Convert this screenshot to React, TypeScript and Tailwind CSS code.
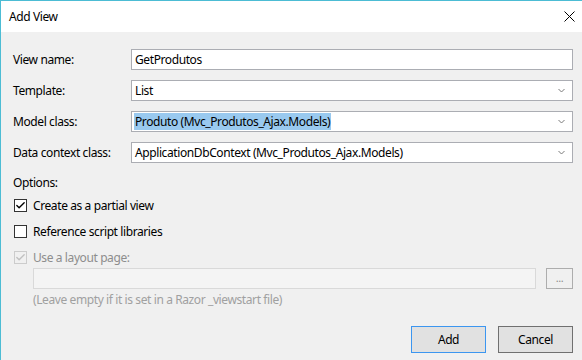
import { Check } from 'lucide-react'

const font = { fontFamily: '"Noto Sans", "Open Sans", sans-serif', letterSpacing: '-0.4px' }

function Chevron() {
  return (
    <svg width="7" height="5" viewBox="0 0 7 5" className="shrink-0">
      <path d="M0.5 1 L3.5 4 L6.5 1" fill="none" stroke="#7a7a7a" strokeWidth="1" />
    </svg>
  )
}

function Field({ label, children }: { label: string; children: React.ReactNode }) {
  return (
    <div className="flex items-center h-[21px]">
      <span className="w-[118px] text-[12px] text-black leading-none">{label}</span>
      {children}
    </div>
  )
}

function Combo({ value, selected = false }: { value: string; selected?: boolean }) {
  return (
    <div className="flex items-center justify-between w-[442px] h-[21px] bg-white border border-[#abadb3] pl-[2px] pr-[7px]">
      <span
        className={`text-[12px] leading-[17px] h-[17px] px-[1px] ${
          selected ? 'bg-[#99c9ef] text-black' : 'text-black'
        }`}
      >
        {value}
      </span>
      <Chevron />
    </div>
  )
}

function CheckBox({ checked, disabled = false }: { checked: boolean; disabled?: boolean }) {
  return (
    <div
      className={`w-[13px] h-[13px] flex items-center justify-center border ${
        disabled ? 'border-[#cccccc] bg-[#f0f0f0]' : 'border-[#333333] bg-white'
      }`}
    >
      {checked && (
        <Check size={11} strokeWidth={3} color={disabled ? '#c0c0c0' : '#000000'} />
      )}
    </div>
  )
}

export default function App() {
  return (
    <div className="w-[582px] h-[360px] bg-[#f0f0f0] border-l border-[#4cbcd4] flex flex-col overflow-hidden" style={font}>
      {/* Title bar */}
      <div className="h-[32px] bg-white border-t border-[#4cbcd4] flex items-center justify-between pl-[8px] pr-[6px] shrink-0">
        <span className="text-[12px] text-black">Add View</span>
        <svg width="11" height="11" viewBox="0 0 11 11" className="mt-[-1px] mr-[1px]">
          <path d="M0.5 0.5 L10.5 10.5 M10.5 0.5 L0.5 10.5" stroke="#000" strokeWidth="1" />
        </svg>
      </div>

      <div className="flex flex-col pl-[12px] pt-[17px]">
        <div className="flex flex-col gap-[10px]">
          <Field label="View name:">
            <div className="w-[442px] h-[21px] bg-white border border-[#abadb3] px-[3px] flex items-center text-[12px] text-black">
              GetProdutos
            </div>
          </Field>
          <Field label="Template:">
            <Combo value="List" />
          </Field>
          <Field label="Model class:">
            <Combo value="Produto (Mvc_Produtos_Ajax.Models)" selected />
          </Field>
          <Field label="Data context class:">
            <Combo value="ApplicationDbContext (Mvc_Produtos_Ajax.Models)" />
          </Field>
        </div>

        <div className="mt-[12px] text-[12px] text-black h-[16px] leading-[16px]">Options:</div>

        <div className="flex flex-col pl-[1px] mt-[8px] gap-[13px]">
          <label className="flex items-center gap-[6px] h-[13px]">
            <CheckBox checked />
            <span className="text-[12px] text-black">Create as a partial view</span>
          </label>
          <label className="flex items-center gap-[6px] h-[13px]">
            <CheckBox checked={false} />
            <span className="text-[12px] text-black">Reference script libraries</span>
          </label>
          <label className="flex items-center gap-[6px] h-[13px]">
            <CheckBox checked disabled />
            <span className="text-[12px] text-[#8d8d8d]">Use a layout page:</span>
          </label>
        </div>

        <div className="flex items-center mt-[4px] pl-[20px]">
          <div className="w-[503px] h-[21px] bg-[#f4f4f4] border border-[#d9d9d9]" />
          <div className="ml-[10px] w-[27px] h-[21px] border border-[#adadad] bg-[#f0f0f0] flex items-center justify-center text-[11px] text-[#8d8d8d] leading-none pb-[3px]">
            ...
          </div>
        </div>

        <div className="pl-[20px] mt-[3px] text-[12px] text-[#a0a0a0] leading-[16px]">
          (Leave empty if it is set in a Razor _viewstart file)
        </div>

        <div className="flex justify-end gap-[12px] mt-[18px] pr-[9px]">
          <button className="w-[75px] h-[27px] bg-[#e1e1e1] border border-[#3c96f0] text-[12px] text-black">
            Add
          </button>
          <button className="w-[75px] h-[27px] bg-[#e1e1e1] border border-[#707070] text-[12px] text-black">
            Cancel
          </button>
        </div>
      </div>
    </div>
  )
}
